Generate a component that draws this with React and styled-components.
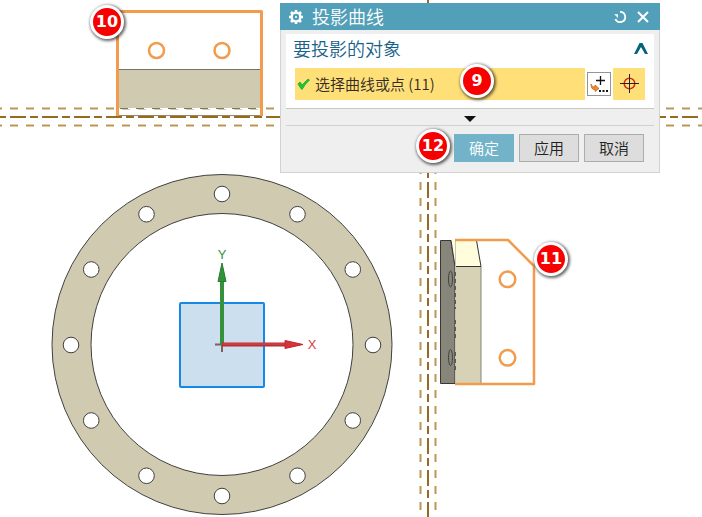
import React from 'react';
import styled, { createGlobalStyle } from 'styled-components';

const GlobalStyle = createGlobalStyle`
  * { box-sizing: border-box; }
  body {
    margin: 0;
    background: #fff;
    font-family: 'Noto Sans CJK SC', sans-serif;
    overflow: hidden;
  }
`;

const Workspace = styled.main`
  position: relative;
  min-height: 100vh;
`;

const Drawing = styled.svg`
  display: block;
  width: 100%;
  height: 100vh;
`;

const Dialog = styled.section`
  position: absolute;
  left: 280px;
  top: 3px;
  width: 380px;
  background: #efefef;
  box-shadow: inset 0 0 0 1px #d2d2d2;
`;

const TitleBar = styled.header`
  display: flex;
  align-items: center;
  height: 27px;
  padding: 0 9px 0 8px;
  background: #529fb9;
  color: #fff;
`;

const Title = styled.h1`
  flex: 1;
  margin: 0 0 0 8px;
  font-size: 18px;
  line-height: 24px;
  height: 26px;
  font-weight: 350;
`;

const IconButton = styled.button`
  display: flex;
  align-items: center;
  justify-content: center;
  width: ${(p) => p.$size}px;
  height: ${(p) => p.$size}px;
  padding: 0;
  border: ${(p) => p.$border || '0'};
  background: ${(p) => p.$background || 'transparent'};
  color: inherit;
`;

const TitleActions = styled.div`
  display: flex;
  gap: 7px;
`;

const Body = styled.div`
  padding: 4px 6px 0;
`;

const Panel = styled.div`
  padding: 0 9px 8px;
  background: #fff;
  border-bottom: 1px solid #c8c8c2;
`;

const PanelHeader = styled.div`
  display: flex;
  align-items: center;
  justify-content: space-between;
  height: 34px;
  margin: 0 -4px 0 -2px;
  padding-bottom: 6px;
  color: #125f7a;
`;

const PanelTitle = styled.h2`
  margin: 0;
  color: #17628a;
  font-size: 18px;
  line-height: 26px;
  font-weight: 350;
`;

const SelectionRow = styled.div`
  display: flex;
  align-items: center;
  gap: 2px;
`;

const SelectionField = styled.div`
  display: flex;
  align-items: center;
  flex: 1;
  height: 32px;
  padding-left: 2px;
  gap: 5px;
  background: #ffe078;
  color: #302b24;
  font-size: 15px;
  font-weight: 350;
  line-height: 32px;
`;

const MoreButton = styled.button`
  display: flex;
  justify-content: center;
  align-items: center;
  width: 100%;
  height: 17px;
  padding: 4px 1px 0 0;
  border: 0;
  border-bottom: 1px solid #d0d0d0;
  background: transparent;
`;

const Footer = styled.footer`
  display: flex;
  justify-content: flex-end;
  gap: 5px;
  padding: 8px 10px 11px;
`;

const ActionButton = styled.button`
  width: 60px;
  height: 28px;
  padding: 0;
  border: 1px solid ${(p) => (p.$primary ? '#72b3c9' : '#adadad')};
  background: ${(p) => (p.$primary ? '#72b3c9' : '#dddddd')};
  color: ${(p) => (p.$primary ? '#fff' : '#222')};
  font-family: inherit;
  font-size: 15px;
  font-weight: 350;
  line-height: 24px;
`;

const Marker = styled.span`
  position: absolute;
  left: ${(p) => p.$x}px;
  top: ${(p) => p.$y}px;
  display: flex;
  align-items: center;
  justify-content: center;
  width: 34px;
  height: 34px;
  margin: -17px 0 0 -17px;
  border: 3px solid #fff;
  border-radius: 50%;
  background: #f80000;
  box-shadow: 1px 1px 3px 1px rgba(0, 0, 0, 0.6);
  color: #fff;
  font: bold 16px/20px 'DejaVu Sans', sans-serif;
`;

const holes = Array.from({ length: 12 }, (_, i) => {
  const angle = (i * Math.PI) / 6;
  return [222 + 151 * Math.cos(angle), 345 + 151 * Math.sin(angle)];
});

function CenterLines() {
  return (
    <g fill="none" strokeWidth="2">
      <g stroke="#b99a52" strokeDasharray="8 8">
        <path d="M-6 108.5H4000M-6 125.5H4000" />
        <path d="M420.5 -10V4000M435.5 -10V4000" />
      </g>
      <path d="M-22 117H4000M428 -10V4000" stroke="#966b19" strokeDasharray="16 4 8 4" />
    </g>
  );
}

function TopView() {
  return (
    <g>
      <path d="M118 12H261V109H118Z" fill="#fff" />
      <path d="M118 69.5H261V108H118Z" fill="#cfcab0" />
      <path d="M118 69.5H261" stroke="#747468" />
      <path d="M120 108.5H261" stroke="#77776c" strokeDasharray="8 8" />
      <path d="M118 115.5H261" stroke="#98846b" />
      <g fill="none" stroke="#f29b4c">
        <path d="M117.5 116V11.5H261.5V116" strokeWidth="3" strokeLinejoin="round" />
        <circle cx="156.5" cy="50.5" r="7.5" strokeWidth="2.5" />
        <circle cx="222" cy="50.5" r="7.5" strokeWidth="2.5" />
      </g>
    </g>
  );
}

function Flange() {
  return (
    <g stroke="#404040">
      <circle cx="222" cy="344.5" r="170" fill="#d0cbb0" />
      <circle cx="222" cy="344.5" r="131" fill="#fff" />
      {holes.map(([x, y]) => (
        <circle key={`${x}-${y}`} cx={x} cy={y} r="7.8" fill="#fff" />
      ))}
      <rect x="180" y="303" width="84" height="84" rx="1" fill="#cbdfee" stroke="#1688e5" strokeWidth="2" />
      <path d="M215 344.5H223M222 344V352" stroke="#855b5b" strokeWidth="2" />
      <path d="M222 345V281" stroke="#37913c" strokeWidth="4" />
      <path d="M222 263L226 281.5H218Z" fill="#30933a" stroke="#287b30" strokeWidth="1" />
      <path d="M222 344.5H286" stroke="#b82f35" strokeWidth="4" />
      <path d="M223 344H286" stroke="#e34a50" strokeWidth="1" />
      <path d="M303 344.5L285 340.5V348.5Z" fill="#dc3038" stroke="#b92a30" strokeWidth="1" />
      <g stroke="none" fontFamily="Liberation Sans" fontSize="13">
        <text x="222" y="259" textAnchor="middle" fill="#2c973b">Y</text>
        <text x="312" y="349" textAnchor="middle" fill="#d64045">X</text>
      </g>
    </g>
  );
}

function SideView() {
  return (
    <g>
      <path d="M440.5 240.5H451L455 266V383.5H440.5Z" fill="#88857a" stroke="#383832" />
      <path d="M451 240.5H476.5L481 266.5H455Z" fill="#fffddb" />
      <path d="M455 266.5H481V384H455Z" fill="#d7d1b6" />
      <path d="M451 240.5L455 266.5H481L476.5 240.5" fill="none" stroke="#333" />
      <path d="M481 267V384" stroke="#858579" />
      <path d="M455.5 241V383" stroke="#c6c4b6" />
      <path d="M455 272V309M455 320V341M455 352V373" stroke="#5b5b53" strokeWidth="2" strokeDasharray="4 3" />
      <g fill="none" stroke="#44443e">
        <ellipse cx="450.5" cy="279" rx="2" ry="8" />
        <ellipse cx="450.5" cy="357.5" rx="2" ry="8" />
      </g>
      <g fill="none" stroke="#f29b4c">
        <path d="M455 240H508L534 266V384H455" strokeWidth="2.5" strokeLinejoin="round" />
        <circle cx="507.5" cy="279.3" r="7.8" strokeWidth="2.5" />
        <circle cx="507.5" cy="357.8" r="7.8" strokeWidth="2.5" />
      </g>
    </g>
  );
}

function GearIcon() {
  return (
    <svg width="16" height="16" viewBox="0 0 16 16" fill="none" stroke="#fff">
      <circle cx="8" cy="8" r="4.4" strokeWidth="2.4" />
      <path d="M8 1V3M8 13V15M1 8H3M13 8H15M3 3L4.5 4.5M11.5 11.5L13 13M3 13L4.5 11.5M11.5 4.5L13 3" strokeWidth="2.6" />
      <circle cx="8" cy="8" r="1" fill="#fff" stroke="none" />
    </svg>
  );
}

function ProjectionDialog() {
  return (
    <Dialog role="dialog" aria-labelledby="dialog-title">
      <TitleBar>
        <GearIcon />
        <Title id="dialog-title">投影曲线</Title>
        <TitleActions>
          <IconButton $size={16} aria-label="重置">
            <svg width="14" height="14" viewBox="0 0 14 14" fill="none" stroke="#fff" strokeWidth="1.8">
              <path d="M7 1.9A5.1 5.1 0 1 1 2.4 9" />
              <path d="M1.2 4.2H5V8Z" fill="#fff" stroke="none" />
            </svg>
          </IconButton>
          <IconButton $size={16} aria-label="关闭">
            <svg width="12" height="12" viewBox="0 0 12 12" stroke="#fff" strokeWidth="2">
              <path d="M1 1L11 11M11 1L1 11" />
            </svg>
          </IconButton>
        </TitleActions>
      </TitleBar>
      <Body>
        <Panel>
          <PanelHeader>
            <PanelTitle>要投影的对象</PanelTitle>
            <IconButton $size={16} aria-label="折叠">
              <svg width="14" height="11" viewBox="0 0 14 11" fill="#07637a">
                <path d="M5.5 0H8.5L14 11H11L7 4L3 11H0Z" />
              </svg>
            </IconButton>
          </PanelHeader>
          <SelectionRow>
            <SelectionField>
              <svg width="13" height="12" viewBox="0 0 13 12">
                <path d="M1 6L3 4L5 7L11 1L12.5 2Q8 6 5 11.5Q4 11 1 6Z" fill="#20c63a" stroke="#0c9e27" strokeWidth=".7" />
              </svg>
              <span>选择曲线或点 (11)</span>
            </SelectionField>
            <IconButton $size={24} $border="1px solid #92969b" $background="#fff" aria-label="点构造器">
              <svg width="22" height="22" viewBox="0 0 22 22" fill="none">
                <path d="M8 7.5H17M12.5 3V12" stroke="#111" strokeWidth="1.3" />
                <path d="M11 18H13M14.5 18H16.5M18 18H20" stroke="#111" strokeWidth="2" />
                <path d="M3 11Q3.5 14.5 7 14V12L11 15.5L7 18.5V16.5Q3 17 3 11Z" fill="#f48b25" stroke="#b55c12" strokeWidth=".7" />
              </svg>
            </IconButton>
            <IconButton $size={32} $background="#ffe078" aria-label="选择点">
              <svg width="20" height="20" viewBox="0 0 20 20" fill="none">
                <circle cx="10.5" cy="9.5" r="5.3" stroke="#cf2a13" strokeWidth="1.5" />
                <path d="M1 9.5H20M10.5 0V19" stroke="#222" strokeWidth="1" />
              </svg>
            </IconButton>
          </SelectionRow>
        </Panel>
        <MoreButton aria-label="更多选项">
          <svg width="12" height="6" viewBox="0 0 12 6"><path d="M0 0H12L6 6Z" fill="#111" /></svg>
        </MoreButton>
        <Footer>
          <ActionButton $primary>确定</ActionButton>
          <ActionButton>应用</ActionButton>
          <ActionButton>取消</ActionButton>
        </Footer>
      </Body>
    </Dialog>
  );
}

export default function App() {
  return (
    <Workspace>
      <GlobalStyle />
      <Drawing role="img" aria-label="投影视图">
        <CenterLines />
        <TopView />
        <Flange />
        <SideView />
      </Drawing>
      <ProjectionDialog />
      <Marker $x={107} $y={22}>10</Marker>
      <Marker $x={477} $y={81}>9</Marker>
      <Marker $x={433} $y={146}>12</Marker>
      <Marker $x={551} $y={259}>11</Marker>
    </Workspace>
  );
}
